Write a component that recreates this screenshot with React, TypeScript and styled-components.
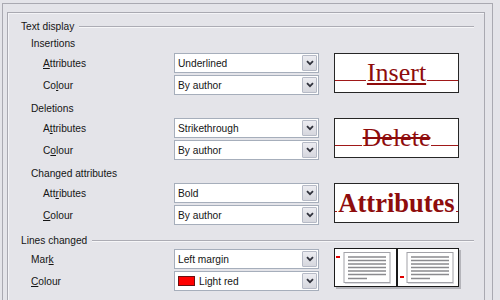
import React from "react";
import styled, { createGlobalStyle } from "styled-components";

const GlobalStyle = createGlobalStyle`
  html, body {
    margin: 0;
    padding: 0;
    background: #e4e4e9;
  }
  body {
    font-family: "Liberation Sans", Arial, sans-serif;
    font-size: 10.2px;
    color: #151515;
  }
  #root {
    width: 500px;
    height: 300px;
    overflow: hidden;
  }
`;

const Frame = styled.div`
  box-sizing: border-box;
  margin: 3px 0 0 2px;
  width: 491px;
  height: 297px;
  padding: 8px 7px 0 4px;
  border: 1px solid #a9a9b1;
  border-bottom: none;
`;

const Panel = styled.div`
  box-sizing: border-box;
  height: 100%;
  padding: 6px 0 0 13px;
  border: 1px solid #a9a9b1;
  border-bottom: none;
  box-shadow: inset 1px 1px 0 #f4f4f7;
`;

const GroupHeader = styled.div<{ $top?: number }>`
  display: flex;
  align-items: center;
  height: 14px;
  margin: ${(p) => p.$top ?? 0}px 10px 0 0;
  &::after {
    content: "";
    flex: 1;
    height: 1px;
    margin-left: 5px;
    background: #acacb4;
    box-shadow: 0 1px 0 #f6f6f8;
  }
`;

const SubHeader = styled.div<{ $top: number }>`
  height: 14px;
  line-height: 14px;
  margin-top: ${(p) => p.$top}px;
  padding-left: 10px;
`;

const Block = styled.div`
  display: grid;
  grid-template-columns: 153px 145px 140px;
  grid-template-rows: 20px 20px;
  row-gap: 2px;
  margin-top: 2px;
`;

const Label = styled.div<{ $indent: number }>`
  align-self: center;
  padding-left: ${(p) => p.$indent}px;
  u {
    text-decoration-thickness: 1px;
    text-underline-offset: 1px;
  }
`;

const Select = styled.div`
  box-sizing: border-box;
  display: flex;
  align-items: center;
  height: 20px;
  padding-left: 3px;
  background: #fff;
  border: 1px solid #a6aebb;
`;

const SelectText = styled.span`
  flex: 1;
  display: flex;
  align-items: center;
  gap: 4px;
`;

const Swatch = styled.span`
  display: inline-block;
  width: 15px;
  height: 8px;
  background: #ff0000;
  border: 1px solid #6a1010;
`;

const DropButton = styled.span`
  box-sizing: border-box;
  display: flex;
  align-items: center;
  justify-content: center;
  width: 15px;
  height: 16px;
  margin-right: 1px;
  background: linear-gradient(#ececf1, #d6d7de);
  border: 1px solid #b6bac6;
  border-radius: 1px;
`;

const Preview = styled.div`
  box-sizing: border-box;
  grid-row: 1 / span 2;
  grid-column: 3;
  align-self: start;
  width: 125px;
  height: 40px;
  margin-left: 15px;
  background: #fff;
  border: 1px solid #262626;
  display: flex;
  align-items: baseline;
  padding-top: 4px;
  overflow: hidden;
`;

const Rule = styled.span`
  flex: 1;
  height: 0;
  border-bottom: 1px solid #a01818;
`;

const Word = styled.span<{ $kind: "insert" | "delete" | "bold" }>`
  font-family: "Liberation Serif", "Times New Roman", serif;
  font-size: ${(p) => (p.$kind === "bold" ? 26.5 : 26)}px;
  font-weight: ${(p) => (p.$kind === "bold" ? 700 : 400)};
  color: #8e0c0c;
  padding: 0 1px;
  text-decoration: ${(p) =>
    p.$kind === "insert" ? "underline" : p.$kind === "delete" ? "line-through" : "none"};
  text-decoration-thickness: 2px;
  text-underline-offset: 2px;
`;

const LinesPreview = styled.div`
  box-sizing: border-box;
  grid-row: 1 / span 2;
  grid-column: 3;
  align-self: start;
  width: 125px;
  height: 39px;
  margin: -1px 0 0 15px;
  background: #fff;
  border: 1px solid #1a1a1a;
  box-shadow: 2px 2px 0 #b4b4ba;
  display: flex;
`;

const Half = styled.div<{ $divider?: boolean }>`
  flex: 1;
  border-right: ${(p) => (p.$divider ? "2px solid #1a1a1a" : "none")};
  svg {
    display: block;
  }
`;

const Chevron = () => (
  <svg width="8" height="6" viewBox="0 0 8 6">
    <path d="M1 1.2 L4 4.2 L7 1.2" fill="none" stroke="#30323c" strokeWidth="1.8" />
  </svg>
);

const Dropdown = ({ children }: { children: React.ReactNode }) => (
  <Select>
    <SelectText>{children}</SelectText>
    <DropButton>
      <Chevron />
    </DropButton>
  </Select>
);

const Page = ({ mark }: { mark: "top" | "bottom" }) => {
  const lines = [8, 11.5, 15, 18.5, 22, 25.5];
  return (
    <svg width="61" height="37" viewBox="0 0 61 37">
      <rect x="9" y="3.5" width="46" height="30" fill="#fff" stroke="#a2a2a8" />
      <line x1="10" y1="34.5" x2="56" y2="34.5" stroke="#dcdce0" />
      {lines.map((y) => (
        <line key={y} x1="13" y1={y} x2="51" y2={y} stroke="#8a8a8e" strokeWidth="1.5" />
      ))}
      <line x1="13" y1="29.5" x2="32" y2="29.5" stroke="#8a8a8e" strokeWidth="1.5" />
      {mark === "top" ? (
        <rect x="1" y="7" width="4" height="2" fill="#e00000" />
      ) : (
        <rect x="2" y="27" width="4" height="2" fill="#e00000" />
      )}
    </svg>
  );
};

export default function App() {
  return (
    <>
      <GlobalStyle />
      <Frame>
        <Panel>
          <GroupHeader>Text display</GroupHeader>

          <SubHeader $top={4}>Insertions</SubHeader>
          <Block>
            <Label $indent={22}>
              <u>A</u>ttributes
            </Label>
            <Dropdown>Underlined</Dropdown>
            <Preview>
              <Rule />
              <Word $kind="insert">Insert</Word>
              <Rule />
            </Preview>
            <Label $indent={22}>
              Co<u>l</u>our
            </Label>
            <Dropdown>By author</Dropdown>
          </Block>

          <SubHeader $top={7}>Deletions</SubHeader>
          <Block>
            <Label $indent={22}>
              A<u>t</u>tributes
            </Label>
            <Dropdown>Strikethrough</Dropdown>
            <Preview>
              <Rule />
              <Word $kind="delete">Delete</Word>
              <Rule />
            </Preview>
            <Label $indent={22}>
              C<u>o</u>lour
            </Label>
            <Dropdown>By author</Dropdown>
          </Block>

          <SubHeader $top={7}>Changed attributes</SubHeader>
          <Block>
            <Label $indent={22}>
              Att<u>r</u>ibutes
            </Label>
            <Dropdown>Bold</Dropdown>
            <Preview>
              <Rule />
              <Word $kind="bold">Attributes</Word>
              <Rule />
            </Preview>
            <Label $indent={22}>
              <u>C</u>olour
            </Label>
            <Dropdown>By author</Dropdown>
          </Block>

          <GroupHeader $top={8}>Lines changed</GroupHeader>
          <Block>
            <Label $indent={10}>
              Mar<u>k</u>
            </Label>
            <Dropdown>Left margin</Dropdown>
            <LinesPreview>
              <Half $divider>
                <Page mark="top" />
              </Half>
              <Half>
                <Page mark="bottom" />
              </Half>
            </LinesPreview>
            <Label $indent={10}>
              <u>C</u>olour
            </Label>
            <Dropdown>
              <Swatch />
              Light red
            </Dropdown>
          </Block>
        </Panel>
      </Frame>
    </>
  );
}
